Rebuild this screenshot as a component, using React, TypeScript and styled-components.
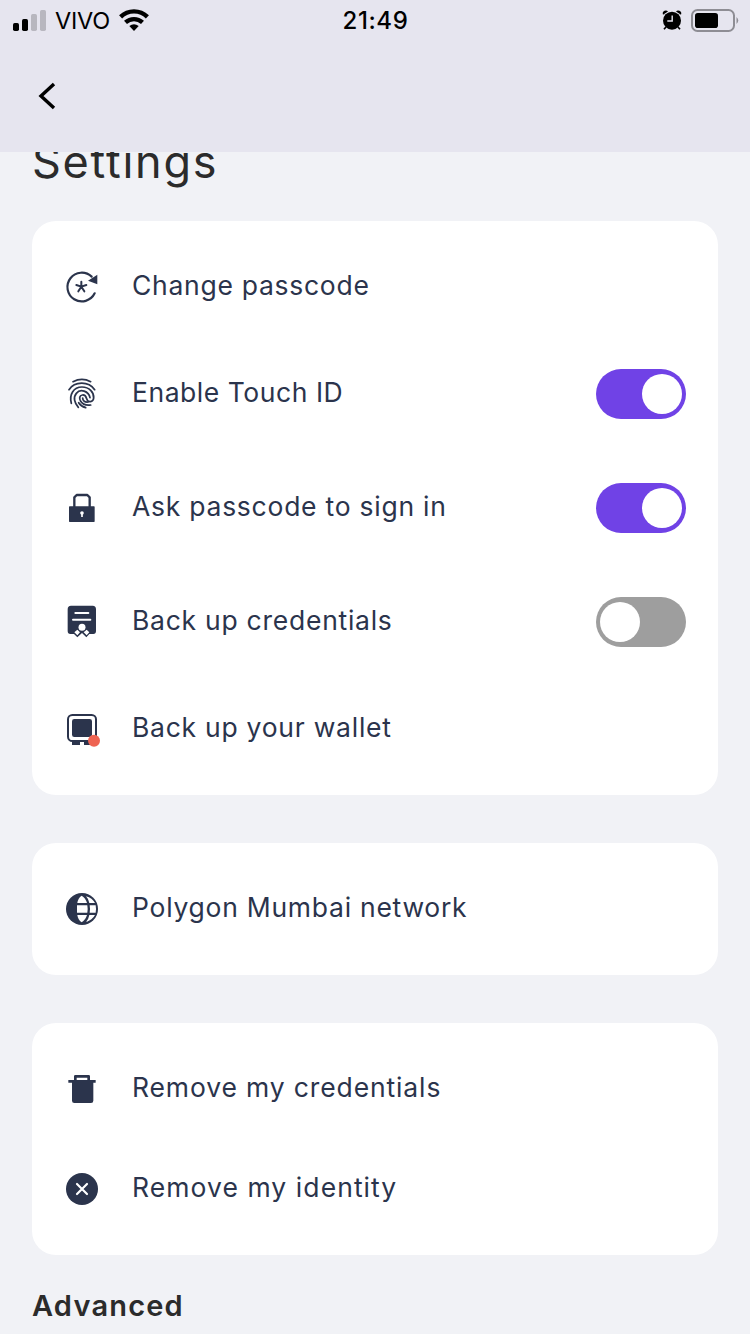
import React from "react";
import styled, { createGlobalStyle } from "styled-components";

const NAVY = "#2b344c";

const GlobalStyle = createGlobalStyle`
  * { box-sizing: border-box; }
  body {
    margin: 0;
    background: #f1f2f6;
    font-family: Inter, "Liberation Sans", sans-serif;
  }
`;

const Screen = styled.div`
  width: 750px;
  height: 1334px;
  display: flex;
  flex-direction: column;
  overflow: hidden;
  background: #f1f2f6;
`;

const Header = styled.header`
  flex: none;
  height: 152px;
  background: #e6e5ef;
  color: #000;
`;

const StatusBar = styled.div`
  display: grid;
  grid-template-columns: 1fr auto 1fr;
  align-items: center;
  height: 40px;
  padding: 0 11px 0 13px;
`;

const StatusGroup = styled.div<{ $end?: boolean }>`
  display: flex;
  align-items: center;
  justify-content: ${(p) => (p.$end ? "flex-end" : "flex-start")};
  gap: 9px;
`;

const Carrier = styled.span`
  font-size: 23.5px;
  line-height: 28px;
  letter-spacing: -0.2px;
  margin-top: 2px;
`;

const Clock = styled.time`
  font-size: 24px;
  line-height: 28px;
  font-weight: 500;
  letter-spacing: 0.6px;
  margin: 2px 1px 0 0;
`;

const BackButton = styled.button`
  display: flex;
  margin: 40px 0 0 32px;
  padding: 0;
  border: 0;
  background: none;
  color: inherit;
`;

const Content = styled.main`
  flex: 1;
  min-height: 0;
  overflow: hidden;
  padding: 0 32px;
`;

const Title = styled.h1`
  margin: -20px 0 29px 0;
  font-size: 45px;
  line-height: 60px;
  font-weight: 400;
  letter-spacing: 1.75px;
  color: #2b2b2b;
`;

const Card = styled.section`
  display: flex;
  flex-direction: column;
  gap: 64px;
  margin-bottom: 48px;
  padding: 48px 32px;
  border-radius: 24px;
  background: #fff;
`;

const Row = styled.div`
  display: flex;
  align-items: center;
  gap: 32px;
`;

const Label = styled.span<{ $tracking: number }>`
  flex: 1;
  height: 36px;
  line-height: 33px;
  font-size: 26.5px;
  letter-spacing: ${(p) => p.$tracking}px;
  white-space: nowrap;
  color: ${NAVY};
`;

const Toggle = styled.button<{ $on: boolean }>`
  display: flex;
  align-items: center;
  justify-content: ${(p) => (p.$on ? "flex-end" : "flex-start")};
  width: 90px;
  height: 50px;
  padding: 0 4px;
  border: 0;
  border-radius: 25px;
  background: ${(p) => (p.$on ? "#7042e6" : "#9e9e9e")};
`;

const Knob = styled.span`
  width: 40px;
  height: 40px;
  border-radius: 50%;
  background: #fff;
`;

const Subheading = styled.h2`
  margin: -17px 0 0 0;
  font-size: 29px;
  line-height: 40px;
  font-weight: 600;
  letter-spacing: 1.2px;
  color: #2b2b2b;
`;

const Glyph = styled.svg`
  flex: none;
  width: 36px;
  height: 36px;
`;

const stroke = (width: number, color = NAVY) => ({
  fill: "none",
  stroke: color,
  strokeWidth: width,
  strokeLinecap: "round" as const,
  strokeLinejoin: "round" as const,
});

const PasscodeIcon = () => (
  <Glyph viewBox="42 27 108 108">
    <path d="M134 100A43 43 0 1 1 125 50" {...stroke(6.6)} />
    <path d="M142 44V73L114 62Z" fill={NAVY} />
    <path d="M94 80V65M94 80L109 75M94 80L103 94M94 80L85 94M94 80L79 75" {...stroke(6)} />
  </Glyph>
);

const FingerprintIcon = () => (
  <Glyph viewBox="42 33 108 108">
    <g {...stroke(5.2)}>
      <path d="M69 50Q96 36 122 50" />
      <path d="M57 74C74 48 116 48 134 74" />
      <path d="M64 115C57 90 70 66 96 66C118 66 132 82 131 99C130 112 113 114 110 101C108 94 104 89 97 90C88 91 87 101 92 109C97 117 107 122 122 120" />
      <path d="M85 127C73 114 69 97 79 85C91 70 116 78 120 98" />
      <path d="M98 99C98 108 105 112 114 111" />
      <path d="M107 128C98 125 91 121 86 113" />
    </g>
  </Glyph>
);

const LockIcon = () => (
  <Glyph viewBox="42 30 108 108">
    <path d="M73 81V52L80 45H112L119 52V81" {...stroke(7)} strokeLinecap="butt" />
    <rect x="57" y="79" width="77" height="47" rx="2" fill={NAVY} />
    <circle cx="96" cy="99" r="5.5" fill="#fff" />
    <path d="M93.5 99H98.5V111H93.5Z" fill="#fff" />
  </Glyph>
);

const CredentialIcon = () => (
  <Glyph viewBox="42 42 108 108">
    <path d="M63 47H128Q138 47 138 58V123Q138 132 130 132H118L109 142L96 129L82 142L72 132H61Q53 132 53 123V58Q53 47 63 47Z" fill={NAVY} />
    <path d="M76 69H115M69 89H121" {...stroke(6, "#fff")} />
    <circle cx="96" cy="112" r="10.5" fill="#fff" />
    <path d="M82 119L90 127L82 136L73 127ZM110 119L118 127L110 136L101 127Z" fill="#fff" />
  </Glyph>
);

const WalletIcon = () => (
  <Glyph viewBox="42 33 108 108">
    <path d="M66 123H90V135H66ZM102 123H126V135H102Z" fill={NAVY} />
    <rect x="54" y="45" width="84" height="78" rx="13" {...stroke(6)} />
    <rect x="66" y="57" width="60" height="54" rx="7" fill={NAVY} />
    <circle cx="132" cy="122" r="18" fill="#ee6352" />
  </Glyph>
);

const GlobeIcon = () => (
  <Glyph viewBox="42 33 108 108">
    <circle cx="96" cy="87" r="48" fill={NAVY} />
    <g fill="#fff">
      <path d="M95 47Q84 54 82 69H111Q106 53 95 47Z" />
      <path d="M81 76H112Q114 87 112 98H81Z" />
      <path d="M82 105H111Q106 121 95 127Q84 120 82 105Z" />
      <path d="M108 49Q116 57 118 69H135Q127 54 108 49Z" />
      <path d="M119 76H137Q139 87 137 98H119Q121 87 119 76Z" />
      <path d="M118 105H135Q127 120 108 126Q116 117 118 105Z" />
    </g>
  </Glyph>
);

const TrashIcon = () => (
  <Glyph viewBox="42 33 108 108">
    <path d="M76 61V49H116V61" {...stroke(8)} strokeLinecap="butt" />
    <path d="M55 60H137V68H130V122Q130 129 123 129H73Q66 129 66 122V68H55Z" fill={NAVY} />
  </Glyph>
);

const RemoveIcon = () => (
  <Glyph viewBox="42 33 108 108">
    <circle cx="96" cy="87" r="48" fill={NAVY} />
    <path d="M81 72L111 102M111 72L81 102" {...stroke(6.5, "#fff")} />
  </Glyph>
);

type ItemProps = { icon: React.ReactNode; label: string; tracking: number; on?: boolean };

const Item = ({ icon, label, tracking, on }: ItemProps) => (
  <Row>
    {icon}
    <Label $tracking={tracking}>{label}</Label>
    {on !== undefined && (
      <Toggle $on={on} role="switch" aria-checked={on} aria-label={label}>
        <Knob />
      </Toggle>
    )}
  </Row>
);

export default function App() {
  return (
    <Screen>
      <GlobalStyle />
      <Header>
        <StatusBar>
          <StatusGroup>
            <svg width="33" height="21" viewBox="0 0 33 21">
              <rect y="13" width="6" height="8" rx="1.7" />
              <rect x="9" y="9" width="6" height="12" rx="1.7" />
              <g fill="#b8b7bf">
                <rect x="18" y="4" width="6" height="17" rx="1.7" />
                <rect x="27" width="6" height="21" rx="1.7" />
              </g>
            </svg>
            <Carrier>VIVO</Carrier>
            <svg width="30" height="22" viewBox="0 0 30 22">
              <g fill="none" stroke="#000" strokeWidth="4.4">
                <path d="M1.6 7.8C9 .6 21 .6 28.4 7.8" />
                <path d="M6.5 13.4C11.4 9 18.6 9 23.5 13.4" />
              </g>
              <path d="M10.3 17Q15 13.4 19.7 17L15 22Z" />
            </svg>
          </StatusGroup>
          <Clock>21:49</Clock>
          <StatusGroup $end>
            <svg width="20" height="20" viewBox="0 0 20 20">
              <circle cx="10" cy="10.7" r="9" />
              <path d="M1 4.8Q0 2 2.5 .8Q4.6 0 6 1.4ZM19 4.8Q20 2 17.5 .8Q15.4 0 14 1.4Z" />
              <path d="M4 17L2 19.3M16 17L18 19.3" stroke="#000" strokeWidth="1.7" />
              <path d="M10.2 5.5V11H5.3" fill="none" stroke="#e6e5ef" strokeWidth="1.4" />
            </svg>
            <svg width="48" height="23" viewBox="0 0 48 23">
              <rect x="1" y="1" width="42" height="21" rx="5.5" fill="none" stroke="#8e8d94" strokeWidth="2" />
              <rect x="4" y="4" width="23" height="15" rx="2.8" />
              <path d="M45.5 8Q49 11.5 45.5 15Z" fill="#8e8d94" />
            </svg>
          </StatusGroup>
        </StatusBar>
        <BackButton aria-label="Back">
          <svg width="32" height="32" viewBox="0 0 32 32">
            <path d="M22 4L9 16L22 28" fill="none" stroke="#000" strokeWidth="3.4" />
          </svg>
        </BackButton>
      </Header>
      <Content>
        <Title>Settings</Title>
        <Card>
          <Item icon={<PasscodeIcon />} label="Change passcode" tracking={0.72} />
          <Item icon={<FingerprintIcon />} label="Enable Touch ID" tracking={0.54} on={true} />
          <Item icon={<LockIcon />} label="Ask passcode to sign in" tracking={0.75} on={true} />
          <Item icon={<CredentialIcon />} label="Back up credentials" tracking={0.74} on={false} />
          <Item icon={<WalletIcon />} label="Back up your wallet" tracking={0.74} />
        </Card>
        <Card>
          <Item icon={<GlobeIcon />} label="Polygon Mumbai network" tracking={0.74} />
        </Card>
        <Card>
          <Item icon={<TrashIcon />} label="Remove my credentials" tracking={0.87} />
          <Item icon={<RemoveIcon />} label="Remove my identity" tracking={1.07} />
        </Card>
        <Subheading>Advanced</Subheading>
      </Content>
    </Screen>
  );
}
